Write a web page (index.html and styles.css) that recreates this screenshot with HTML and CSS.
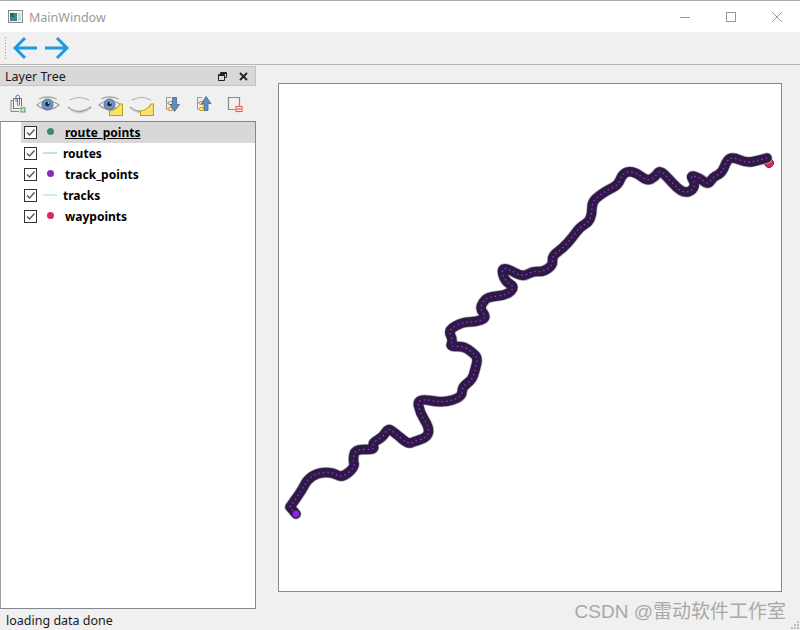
FILE: index.html
```html
<!DOCTYPE html>
<html lang="en">
  <head>
    <meta charset="UTF-8" />
    <meta name="viewport" content="width=device-width, initial-scale=1.0" />
    <title>MainWindow</title>
    <link rel="stylesheet" href="styles.css">
  </head>
  <body>
    <svg class="defs" width="0" height="0">
      <defs>
        <g id="eye-open">
          <path d="M1 13 Q11 4 23 13 Q12 22 1 13 Z" fill="#f2f2f2" stroke="#9a9a9a" stroke-width="1.2" />
          <path d="M3 7 Q11 3 21 7" fill="none" stroke="#aaa" stroke-width="1.3" />
          <circle cx="11.500" cy="12.500" r="5.500" fill="#6d94c4" stroke="#4c6f9c" />
          <circle cx="11.500" cy="12" r="2.300" fill="#1c2430" />
          <circle cx="12.500" cy="11" r="0.800" fill="#fff" />
        </g>
        <g id="eye-closed">
          <path d="M3 8 Q12 3 22 8" fill="none" stroke="#aaa" stroke-width="1.2" />
          <path d="M1 15 Q12 24 24 15" fill="none" stroke="#999" stroke-width="1.6" />
          <path d="M2 16.500 Q12 25 23 16.500" fill="none" stroke="#ccc" stroke-width="1.400" />
        </g>
        <path id="note" d="M11.500 23.500 V19 Q18 18.500 22 12 H24.500 V23.500 Z" fill="#fbe26a" stroke="#c39d14" stroke-width="1.100" />
        <g id="tree-lines">
          <path d="M2.500 3.500 H7 M2.500 3.500 V15.500 M2.500 9 H5 M2.500 15 H5" fill="none" stroke="#999" stroke-width="1" />
          <rect x="5" y="7.500" width="3" height="3" fill="#fff" stroke="#e98f1f" />
          <rect x="5" y="13.500" width="3" height="3" fill="#fff" stroke="#e98f1f" />
        </g>
        <path id="track" d="M296 514 L290 507 L296 498.500 Q302 490 304.500 485 Q307 480 312 476.500 Q317 473 324.500 472.500 Q332 472 337 475 Q342 478 348.500 472.500 Q355 467 354 463.500 Q353 460 354 454.500 Q355 449 365 449.500 Q375 450 373.500 446.500 Q372 443 377.500 440 Q383 437 385.500 432.500 Q388 428 391.500 430.500 Q395 433 401.500 438.500 Q408 444 410.500 443 Q413 442 420.500 439.500 Q428 437 428.500 432 Q429 427 424.500 420 Q420 413 418.500 405.500 Q417 398 430 400.500 Q443 403 452.500 400 Q462 397 462 392 Q462 387 467 383.500 Q472 380 473.500 375 Q475 370 476.500 364 Q478 358 475 355 Q472 352 467.500 349 Q463 346 456.500 346.500 Q450 347 451.500 343.500 Q453 340 450.500 335 Q448 330 455.500 326 Q463 322 469 322 Q475 322 481 320 Q487 318 483.500 313.500 Q480 309 481.500 305.500 Q483 302 485.500 299.500 Q488 297 497.500 296 Q507 295 511 291 Q515 287 510.500 284.500 Q506 282 504 277.500 Q502 273 502.500 270.500 Q503 268 506.500 269 Q510 270 516.500 273.500 Q523 277 528 274 Q533 271 538 271.500 Q543 272 548 268.500 Q553 265 552.500 260.500 Q552 256 557.500 252 Q563 248 567.500 243 Q572 238 576 232.500 Q580 227 584.500 224.500 Q589 222 590.500 217.500 Q592 213 592 207.500 Q592 202 596 198.500 Q600 195 604 192.500 Q608 190 613 187.500 Q618 185 620 180 Q622 175 625 173 Q628 171 632.500 172 Q637 173 642 177 Q647 181 651 179 Q655 177 657.500 173.500 Q660 170 664 174 Q668 178 672.500 183 Q677 188 681 190.500 Q685 193 689 191.500 Q693 190 694 186.500 Q695 183 692.500 179 Q690 175 695 176.500 Q700 178 704 181.500 Q708 185 710.500 181 Q713 177 717.500 175 Q722 173 724.500 166.500 Q727 160 730 158.500 Q733 157 740 160 Q747 163 753.500 161.500 Q760 160 767 158" />
      </defs>
    </svg>

    <header class="titlebar">
      <div class="title">
        <svg class="app-icon" width="15" height="13" viewBox="0 0 15 13">
          <rect x="0.500" y="0.500" width="14" height="12" fill="#f4f4f4" stroke="#8a8a8a" />
          <rect x="2" y="3" width="7" height="8" fill="#3f8a85" />
          <rect x="2" y="3" width="4" height="4" fill="#2f5f7a" />
          <rect x="10" y="3" width="3" height="8" fill="#c8dce0" />
        </svg>
        <span class="title-text">MainWindow</span>
      </div>
      <div class="win-controls">
        <svg width="10" height="10" viewBox="0 0 10 10"><path d="M0 5.500 H10" stroke="#999" /></svg>
        <svg width="10" height="10" viewBox="0 0 10 10"><rect x="0.500" y="0.500" width="9" height="9" fill="none" stroke="#999" /></svg>
        <svg width="10" height="10" viewBox="0 0 10 10"><path d="M0 0 L10 10 M10 0 L0 10" stroke="#999" /></svg>
      </div>
    </header>

    <div class="toolbar">
      <span class="gripper"></span>
      <svg width="25" height="24" viewBox="0 0 25 24">
        <path d="M24 12 H2 M12 2 L2 12 L12 22" fill="none" stroke="#1b9ce2" stroke-width="3" />
      </svg>
      <svg width="25" height="24" viewBox="0 0 25 24">
        <path d="M1 12 H23 M13 2 L23 12 L13 22" fill="none" stroke="#1b9ce2" stroke-width="3" />
      </svg>
    </div>

    <main class="content">
      <aside class="dock">
        <div class="dock-title">
          <span>Layer Tree</span>
          <div class="dock-buttons">
            <svg width="9" height="9" viewBox="0 0 9 9">
              <path d="M2.500 2.500 V0.500 H8.500 V5.500 H6.500 M0.500 2.500 H6.500 V8.500 H0.500 Z M0.500 3.500 H6.500 M2.500 1.500 H8.500" fill="none" stroke="#222" />
            </svg>
            <svg width="9" height="9" viewBox="0 0 9 9">
              <path d="M1 1 L8 8 M8 1 L1 8" fill="none" stroke="#222" stroke-width="1.800" />
            </svg>
          </div>
        </div>

        <div class="dock-tools">
          <span class="tool">
            <svg width="16" height="20" viewBox="0 0 16 20">
              <path d="M3.500 6.500 H1 V17.500 H9" fill="none" stroke="#888" />
              <rect x="3.500" y="4.500" width="8" height="10" fill="#f4f4f4" stroke="#777" />
              <path d="M6 8 V2 Q8 0 9.500 2 V11 Q8 12.500 7.500 11 V4" fill="none" stroke="#5a7fa8" />
              <rect x="10" y="13" width="6" height="6" fill="#6cab6c" stroke="#d8e8d8" />
              <path d="M13 14.500 V17.500 M11.500 16 H14.500" stroke="#fff" />
            </svg>
          </span>
          <span class="tool"><svg width="25" height="24" viewBox="0 0 25 24"><use href="#eye-open" /></svg></span>
          <span class="tool"><svg width="25" height="24" viewBox="0 0 25 24"><use href="#eye-closed" /></svg></span>
          <span class="tool"><svg width="25" height="24" viewBox="0 0 25 24"><use href="#eye-open" /><use href="#note" /></svg></span>
          <span class="tool"><svg width="25" height="24" viewBox="0 0 25 24"><use href="#eye-closed" /><use href="#note" /></svg></span>
          <span class="tool">
            <svg width="17" height="20" viewBox="0 0 17 20">
              <use href="#tree-lines" />
              <path d="M8.500 3.500 H12.500 V10.500 H15.500 L10.500 17.500 L6 10.500 H8.500 Z" fill="#5f8dbd" stroke="#3f6690" stroke-width="0.800" />
            </svg>
          </span>
          <span class="tool">
            <svg width="17" height="20" viewBox="0 0 17 20">
              <use href="#tree-lines" />
              <path d="M9 16.500 H13 V9.500 H16 L11 2.500 L6.500 9.500 H9 Z" fill="#5f8dbd" stroke="#3f6690" stroke-width="0.800" />
            </svg>
          </span>
          <span class="tool">
            <svg width="16" height="20" viewBox="0 0 16 20">
              <path d="M12.500 12 V3.500 H1.500 V15.500 H8.500" fill="none" stroke="#8a8a8a" stroke-width="1.200" />
              <rect x="9" y="12.500" width="6" height="5" fill="#fff" stroke="#f05a66" stroke-width="1.200" />
              <path d="M10 15 H14" stroke="#f05a66" stroke-width="1.500" />
            </svg>
          </span>
        </div>

        <ul class="tree">
          <li class="tree-row selected">
            <span class="check"><svg width="11" height="11" viewBox="0 0 11 11"><path d="M2 5.500 L4.500 8 L9.500 2.500" fill="none" stroke="#555" stroke-width="1.300" /></svg></span>
            <span class="symbol"><span class="dot dot-green"></span></span>
            <span class="layer-name">route_points</span>
          </li>
          <li class="tree-row">
            <span class="check"><svg width="11" height="11" viewBox="0 0 11 11"><path d="M2 5.500 L4.500 8 L9.500 2.500" fill="none" stroke="#555" stroke-width="1.300" /></svg></span>
            <span class="symbol line-symbol"><span class="line line-green"></span></span>
            <span class="layer-name">routes</span>
          </li>
          <li class="tree-row">
            <span class="check"><svg width="11" height="11" viewBox="0 0 11 11"><path d="M2 5.500 L4.500 8 L9.500 2.500" fill="none" stroke="#555" stroke-width="1.300" /></svg></span>
            <span class="symbol"><span class="dot dot-purple"></span></span>
            <span class="layer-name">track_points</span>
          </li>
          <li class="tree-row">
            <span class="check"><svg width="11" height="11" viewBox="0 0 11 11"><path d="M2 5.500 L4.500 8 L9.500 2.500" fill="none" stroke="#555" stroke-width="1.300" /></svg></span>
            <span class="symbol line-symbol"><span class="line line-mint"></span></span>
            <span class="layer-name">tracks</span>
          </li>
          <li class="tree-row">
            <span class="check"><svg width="11" height="11" viewBox="0 0 11 11"><path d="M2 5.500 L4.500 8 L9.500 2.500" fill="none" stroke="#555" stroke-width="1.300" /></svg></span>
            <span class="symbol"><span class="dot dot-red"></span></span>
            <span class="layer-name">waypoints</span>
          </li>
        </ul>
      </aside>

      <section class="canvas-wrap">
        <div class="canvas">
          <!-- viewBox uses window coordinates so the track can be read off the screenshot -->
          <svg class="map" width="502" height="506" viewBox="279 84 502 506">
            <circle cx="769" cy="163" r="4.500" fill="#e0245e" stroke="#8a1a40" />
            <g fill="none" stroke-linecap="round" stroke-linejoin="round">
              <use class="track-halo" href="#track" />
              <use class="track-body" href="#track" />
              <use class="track-dots" href="#track" />
            </g>
            <circle cx="296" cy="514" r="3.800" fill="#8a2be2" stroke="#3a1c56" />
          </svg>
        </div>
      </section>
    </main>

    <footer class="statusbar">
      <span class="status-text">loading data done</span>
      <svg class="grip" width="10" height="10" viewBox="0 0 10 10">
        <path d="M7 1 h2 v2 h-2 Z M4 4 h2 v2 h-2 Z M7 4 h2 v2 h-2 Z M1 7 h2 v2 h-2 Z M4 7 h2 v2 h-2 Z M7 7 h2 v2 h-2 Z" fill="#bbb" />
      </svg>
    </footer>

    <div class="watermark">CSDN @雷动软件工作室</div>
  </body>
</html>
```

FILE: styles.css
```css
html,
body {
  height: 100%;
}

body {
  margin: 0;
  padding: 0;
  font-family: "Noto Sans", "Open Sans", sans-serif;
  font-size: 12px;
  color: #1a1a1a;
  background-color: #f0f0f0;
  display: flex;
  flex-direction: column;
  overflow: hidden;
  position: relative;
}

.defs {
  position: absolute;
}

.titlebar {
  height: 31px;
  flex: none;
  display: flex;
  align-items: center;
  justify-content: space-between;
  background-color: #fff;
  border-top: 1px solid #aaa;
}

.title {
  display: flex;
  align-items: center;
  gap: 6px;
  padding-left: 8px;
  color: #999;
  font-size: 12.5px;
}

.title-text {
  padding-top: 2px;
}

.win-controls {
  display: flex;
  gap: 36px;
  padding-right: 18px;
}

.toolbar {
  height: 33px;
  flex: none;
  display: flex;
  align-items: center;
  gap: 6px;
  padding-left: 4px;
  border-bottom: 1px solid #b4b4b4;
  box-sizing: border-box;
}

.gripper {
  width: 3px;
  height: 25px;
  background-image: radial-gradient(#999 1px, transparent 1px);
  background-size: 3px 3px;
}

.content {
  flex: 1;
  min-height: 0;
  display: flex;
}

.dock {
  width: 256px;
  flex: none;
  display: flex;
  flex-direction: column;
  padding-top: 1px;
}

.dock-title {
  height: 20px;
  flex: none;
  display: flex;
  align-items: center;
  justify-content: space-between;
  padding-left: 5px;
  background-color: #d8d8d8;
  border: 1px solid #c4c4c4;
  border-left: none;
  box-sizing: border-box;
  font-size: 12.5px;
}

.dock-buttons {
  display: flex;
  gap: 12px;
  padding-right: 7px;
}

.dock-tools {
  height: 35px;
  flex: none;
  display: flex;
  align-items: center;
  padding-left: 2px;
}

.tool {
  width: 31px;
  display: flex;
  justify-content: center;
}

.tree {
  flex: 1;
  margin: 0;
  padding: 0;
  list-style: none;
  background-color: #fff;
  border: 1px solid #828790;
  border-left-color: #a0a0a0;
  box-sizing: border-box;
}

.tree-row {
  height: 21px;
  margin-left: 20px;
  display: flex;
  align-items: center;
  font-weight: 700;
  color: #000;
}

.tree-row.selected {
  background-color: #d8d8d8;
}

.tree-row.selected .layer-name {
  text-decoration: underline;
}

.check {
  width: 11px;
  height: 11px;
  margin-left: 3px;
  border: 1px solid #333;
  background-color: #fff;
  display: flex;
}

.symbol {
  width: 14px;
  margin-left: 6px;
  margin-right: 8px;
  display: flex;
  justify-content: center;
}

.line-symbol {
  margin-right: 6px;
}

.dot {
  width: 7px;
  height: 7px;
  border-radius: 50%;
  margin-top: -2px;
}

.dot-green {
  background-color: #3c8a69;
}

.dot-purple {
  background-color: #7f2fc0;
}

.dot-red {
  background-color: #d92a5c;
}

.line {
  width: 14px;
  height: 2px;
  margin-top: -2px;
}

.line-green {
  background-color: #c3e5d4;
}

.line-mint {
  background-color: #ccf0dc;
}

.canvas-wrap {
  flex: 1;
  padding: 18px 18px 17px 22px;
  display: flex;
}

.canvas {
  flex: 1;
  background-color: #fff;
  border: 1px solid #828790;
  display: flex;
}

.track-halo {
  stroke: #b9b5bf;
  stroke-width: 11;
}

.track-body {
  stroke: #2f1a45;
  stroke-width: 9.500;
}

.track-dots {
  stroke: #9b30f0;
  stroke-width: 1.300;
  stroke-dasharray: 1.500 3;
  stroke-linecap: butt;
}

.statusbar {
  height: 21px;
  flex: none;
  display: flex;
  align-items: center;
  justify-content: space-between;
  padding-left: 6px;
  font-size: 12.5px;
}

.status-text {
  padding-top: 2px;
}

.grip {
  align-self: flex-end;
}

.watermark {
  position: absolute;
  right: 14px;
  bottom: 7px;
  font-family: "Liberation Sans", "Noto Sans CJK SC", sans-serif;
  font-size: 19px;
  color: #a8a8a8;
}
```
